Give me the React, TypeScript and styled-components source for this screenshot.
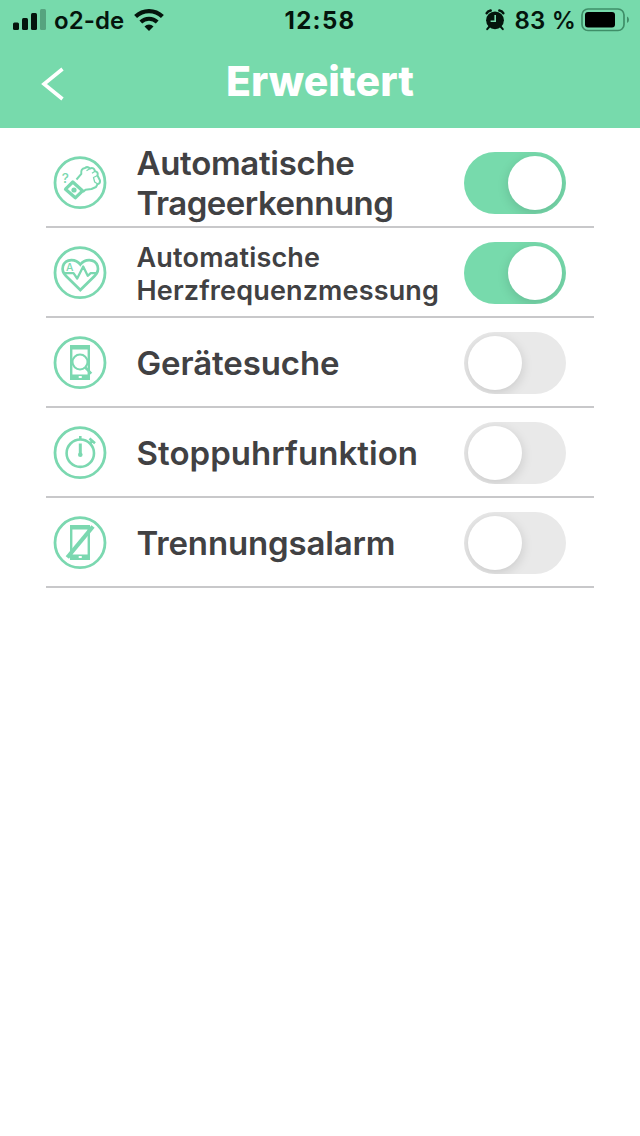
import React from "react";
import styled, { createGlobalStyle } from "styled-components";

const green = "#77daac";
const iconGreen = "#7bd8b0";

const GlobalStyle = createGlobalStyle`
  body {
    margin: 0;
    background: #fff;
    font-family: Inter, "Liberation Sans", sans-serif;
  }
`;

const Screen = styled.main`
  width: 640px;
  height: 1136px;
  background: #fff;
  overflow: hidden;
`;

const Header = styled.header`
  height: 128px;
  background: ${green};
`;

const StatusBar = styled.div`
  display: grid;
  grid-template-columns: 1fr auto 1fr;
  align-items: center;
  height: 40px;
  padding: 0 11px 0 13px;
  color: #04140c;
`;

const StatusGroup = styled.div<{ $end?: boolean }>`
  display: flex;
  align-items: center;
  justify-content: ${(p) => (p.$end ? "flex-end" : "flex-start")};

  svg {
    flex: none;
    margin-bottom: 2px;
  }
`;

const StatusText = styled.span<{ $weight: number; $spacing: number; $gap?: string }>`
  font-size: 24px;
  line-height: 40px;
  padding-top: 1px;
  font-weight: ${(p) => p.$weight};
  letter-spacing: ${(p) => p.$spacing}px;
  margin: ${(p) => p.$gap ?? "0"};
  white-space: nowrap;
`;

const NavBar = styled.nav`
  display: grid;
  grid-template-columns: 64px 1fr 64px;
  align-items: center;
  height: 88px;
`;

const BackButton = styled.button`
  display: flex;
  justify-content: flex-end;
  padding: 0;
  border: 0;
  background: none;
`;

const Title = styled.h1`
  margin: 0;
  padding-bottom: 6px;
  color: #fff;
  font-size: 41px;
  line-height: 50px;
  font-weight: 800;
  letter-spacing: 0.1px;
  text-align: center;
`;

const List = styled.ul`
  margin: 10px 46px 0;
  padding: 0;
  list-style: none;
`;

const Row = styled.li`
  display: grid;
  grid-template-columns: 90.5px 1fr 102px;
  align-items: center;
  box-sizing: border-box;
  height: 90px;
  padding: 0 28px 0 0;
  border-bottom: 2px solid #c8c8ca;
`;

const Badge = styled.svg`
  display: block;
  width: 54px;
  height: 54px;
  margin: 1px 0 0 7px;
  fill: none;
  stroke: ${iconGreen};
  stroke-width: 2;
`;

const Label = styled.span<{ $small?: boolean }>`
  color: #414143;
  font-size: ${(p) => (p.$small ? 27 : 33)}px;
  line-height: ${(p) => (p.$small ? 33 : 40)}px;
  font-weight: 580;
  padding-top: ${(p) => (p.$small ? 3 : 1)}px;
  white-space: nowrap;
`;

const Line = styled.span<{ $spacing: number }>`
  display: block;
  letter-spacing: ${(p) => p.$spacing}px;
`;

const Toggle = styled.button<{ $on: boolean }>`
  display: flex;
  justify-content: ${(p) => (p.$on ? "flex-end" : "flex-start")};
  width: 102px;
  height: 62px;
  margin: 2px 0 0;
  padding: 4px;
  border: 0;
  border-radius: 31px;
  background: ${(p) => (p.$on ? green : "#e9e9e9")};
  overflow: hidden;
`;

const Knob = styled.span`
  width: 54px;
  height: 54px;
  border-radius: 50%;
  background: #fff;
  box-shadow: 0 3px 12px rgba(0, 0, 0, 0.14);
`;

const Signal = () => (
  <svg width="33" height="21" viewBox="0 0 33 21" fill="#04140c">
    <rect x="0" y="13.5" width="6" height="7.5" rx="1.5" />
    <rect x="9" y="9" width="6" height="12" rx="1.5" />
    <rect x="18" y="4" width="6" height="17" rx="1.5" />
    <rect x="27" y="0" width="6" height="21" rx="1.5" opacity="0.28" />
  </svg>
);

const Wifi = () => (
  <svg width="30" height="22" viewBox="0 0 30 22" fill="none" stroke="#04140c">
    <path d="M1.600 7.600a19.200 19.200 0 0 1 26.800 0" strokeWidth="4.200" />
    <path d="M6.800 13a11.800 11.800 0 0 1 16.400 0" strokeWidth="4" />
    <path d="M15 22l-4.500-4.600a6.400 6.400 0 0 1 9 0z" fill="#04140c" stroke="none" />
  </svg>
);

const Alarm = () => (
  <svg width="20" height="22" viewBox="0 0 20 22" fill="none" stroke="#04140c">
    <circle cx="10" cy="11.3" r="8.9" fill="#04140c" stroke="none" />
    <path d="M1.700 4.200Q2.700 2 5.600 1.500M18.300 4.200Q17.300 2 14.400 1.500" strokeWidth="2.600" strokeLinecap="round" />
    <path d="M4.500 17.500l-2.300 2.700M15.500 17.500l2.300 2.700" strokeWidth="2" strokeLinecap="round" />
    <path d="M10.200 6v6.200H5.600" stroke={green} strokeWidth="1.600" />
  </svg>
);

const Battery = () => (
  <svg width="48" height="24" viewBox="0 0 48 24" fill="none">
    <rect x="1" y="1" width="42" height="21.5" rx="6" stroke="#3f8e68" strokeWidth="1.7" />
    <rect x="4" y="4" width="30" height="15.5" rx="3" fill="#000" />
    <path d="M46 8.500q2 1 2 3.300t-2 3.300z" fill="#3f8e68" />
  </svg>
);

const Ring = () => <circle cx="27" cy="26.7" r="25" strokeWidth="2.8" />;

const PhoneBody = () => (
  <>
    <rect x="18.2" y="11" width="17.6" height="31" rx="1" strokeWidth="2.400" />
    <path d="M17 9h20v4.500H17zM17 38.500h20V44H17z" fill={iconGreen} stroke="none" />
    <rect x="25.5" y="40" width="3.5" height="2" rx="1" fill="#fff" stroke="none" />
  </>
);

const WristIcon = () => (
  <Badge viewBox="0 0 54 54">
    <Ring />
    <path
      d="M23.500 23.500L28.300 17.800Q27.500 12.500 32 12Q34.500 10 37 12.500Q41 11 42 15.200Q45.500 15.800 44.500 19.500L47 24.500Q47.500 27.500 44.500 28.200L43 31L38.500 33L32.500 33.700L30 36"
      strokeWidth="2"
      strokeLinejoin="round"
    />
    <path d="M33.500 14.800l3.500-2.300M39 17.200l3-2M44.500 19.500l-4 2 1.200 4.500 3 2" strokeWidth="1.300" strokeLinejoin="round" />
    <path d="M19.800 26L29.500 34.800 22.300 41.800 12.500 33.200z" strokeWidth="3.200" strokeLinejoin="round" />
    <circle cx="21" cy="34" r="2.600" fill={iconGreen} stroke="none" />
    <text x="8.700" y="26.500" fontSize="13.500" fontWeight="500" fontFamily="Inter, sans-serif" fill={iconGreen} stroke="none">?</text>
  </Badge>
);

const HeartIcon = () => (
  <Badge viewBox="0 0 54 54">
    <Ring />
    <path
      d="M27.300 44L13 30Q8.500 25.500 10 20 12 14.300 18.300 14.100 23.800 14 27.300 18.500q3.500-4.500 9-4.400 6.300.2 8.300 5.900 1.500 5.500-3 10z"
      strokeWidth="2.700"
    />
    <path d="M11 27.200h9.500l3.700 5.300 6-12 4.500 9.300 3-2.600h6.500" strokeWidth="2.300" strokeLinejoin="round" />
    <text x="13" y="25.300" fontSize="10.500" fontWeight="500" fontFamily="Inter, sans-serif" fill={iconGreen} stroke="none">A</text>
  </Badge>
);

const SearchPhoneIcon = () => (
  <Badge viewBox="0 0 54 54">
    <Ring />
    <PhoneBody />
    <circle cx="27" cy="26" r="7.500" strokeWidth="2" />
    <path d="M32.300 31.500l6 6.200" strokeWidth="2.600" />
  </Badge>
);

const StopwatchIcon = () => (
  <Badge viewBox="0 0 54 54">
    <Ring />
    <circle cx="27.3" cy="27.200" r="13.700" strokeWidth="2.600" />
    <path d="M27.300 10v4" strokeWidth="2.600" />
    <path d="M36.500 12.500l5.500 4.800M39.300 14.800l-2.500 3" strokeWidth="2.600" />
    <path d="M27.300 17.500v11" strokeWidth="3" />
    <circle cx="27.3" cy="28.700" r="2.300" fill={iconGreen} stroke="none" />
  </Badge>
);

const NoPhoneIcon = () => (
  <Badge viewBox="0 0 54 54">
    <Ring />
    <PhoneBody />
    <path d="M14.300 41.500L40 10.500" strokeWidth="4.200" />
  </Badge>
);

type Setting = {
  id: string;
  icon: React.ReactNode;
  lines: { text: string; spacing: number }[];
  small?: boolean;
  on: boolean;
};

const settings: Setting[] = [
  {
    id: "wear",
    icon: <WristIcon />,
    lines: [
      { text: "Automatische", spacing: -0.3 },
      { text: "Trageerkennung", spacing: -0.5 },
    ],
    on: true,
  },
  {
    id: "heart",
    icon: <HeartIcon />,
    lines: [
      { text: "Automatische", spacing: 0.2 },
      { text: "Herzfrequenzmessung", spacing: 0.15 },
    ],
    small: true,
    on: true,
  },
  { id: "find", icon: <SearchPhoneIcon />, lines: [{ text: "Gerätesuche", spacing: -0.1 }], on: false },
  { id: "stopwatch", icon: <StopwatchIcon />, lines: [{ text: "Stoppuhrfunktion", spacing: 0.05 }], on: false },
  { id: "disconnect", icon: <NoPhoneIcon />, lines: [{ text: "Trennungsalarm", spacing: -0.15 }], on: false },
];

export default function App() {
  return (
    <>
      <GlobalStyle />
      <Screen>
        <Header>
          <StatusBar>
            <StatusGroup>
              <Signal />
              <StatusText $weight={600} $spacing={0.1} $gap="0 10px 0 8px">o2-de</StatusText>
              <Wifi />
            </StatusGroup>
            <StatusText $weight={700} $spacing={1.3} $gap="0 2px 0 0">12:58</StatusText>
            <StatusGroup $end>
              <Alarm />
              <StatusText $weight={600} $spacing={0.2} $gap="0 5px 0 9px">83 %</StatusText>
              <Battery />
            </StatusGroup>
          </StatusBar>
          <NavBar>
            <BackButton aria-label="Zurück">
              <svg width="23" height="34" viewBox="0 0 23 34" fill="none" stroke="#fff" strokeWidth="3.6">
                <path d="M21.500 2L3 17l18.500 15" />
              </svg>
            </BackButton>
            <Title>Erweitert</Title>
          </NavBar>
        </Header>
        <List>
          {settings.map((s) => (
            <Row key={s.id}>
              {s.icon}
              <Label $small={s.small}>
                {s.lines.map((l) => (
                  <Line key={l.text} $spacing={l.spacing}>{l.text}</Line>
                ))}
              </Label>
              <Toggle $on={s.on} role="switch" aria-checked={s.on}>
                <Knob />
              </Toggle>
            </Row>
          ))}
        </List>
      </Screen>
    </>
  );
}
